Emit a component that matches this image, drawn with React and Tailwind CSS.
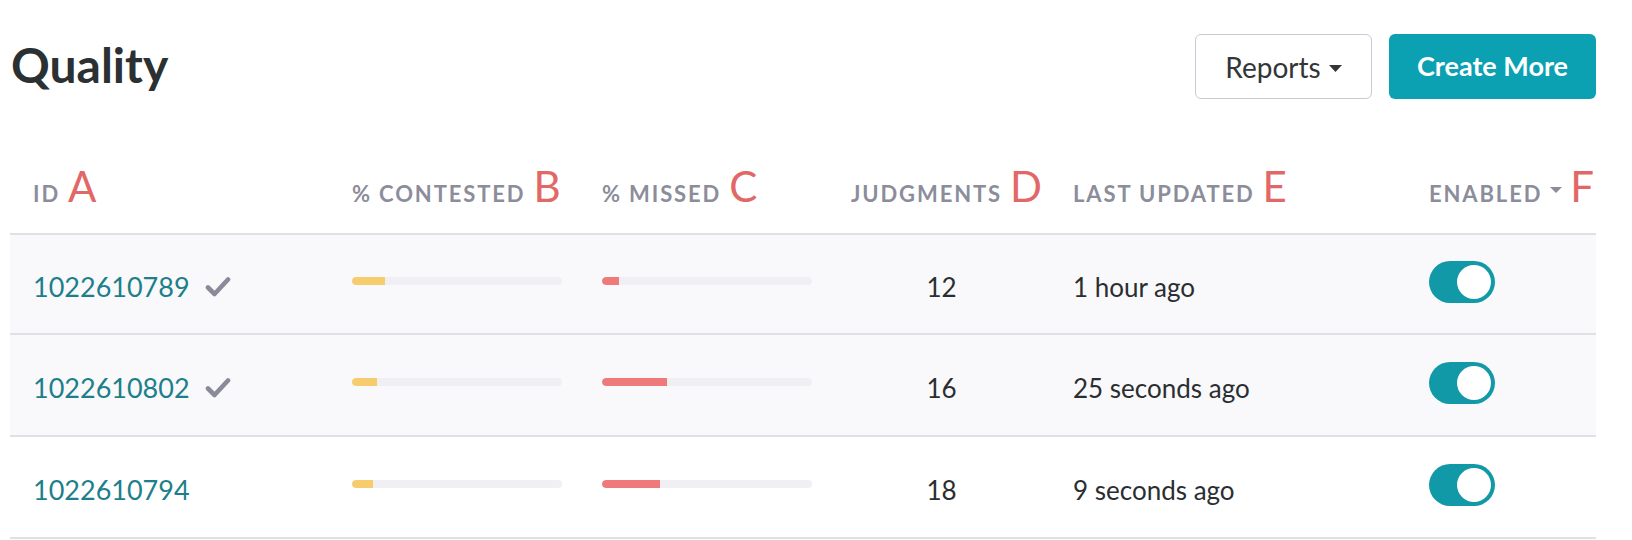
import React from 'react';

const rows = [
  { id: '1022610789', checked: true, contested: 33, missed: 17, judgments: 12, updated: '1 hour ago', shaded: true, tall: false },
  { id: '1022610802', checked: true, contested: 25, missed: 65, judgments: 16, updated: '25 seconds ago', shaded: true, tall: true },
  { id: '1022610794', checked: false, contested: 21, missed: 58, judgments: 18, updated: '9 seconds ago', shaded: false, tall: true },
];

const cols = 'grid grid-cols-[332px_250px_249px_222px_356px_1fr]';

const Mark = ({ children }) => (
  <span className="ml-[8px] text-[42px] leading-none font-normal text-[#e26868] tracking-normal">{children}</span>
);

const Label = ({ children, mark, caret }) => (
  <div className="flex items-baseline pl-[10px]">
    <span className="text-[22px] font-bold tracking-[0.085em] text-[#8b8d9b] uppercase leading-none">{children}</span>
    {caret && (
      <svg width="12" height="6" viewBox="0 0 12 6" className="ml-[8px] self-center mt-[8px]">
        <path d="M0 0 L12 0 L6 6 Z" fill="#8b8d9b" />
      </svg>
    )}
    <Mark>{mark}</Mark>
  </div>
);

const Bar = ({ total, fill, color }) => (
  <div className="h-[8px] rounded-full bg-[#f0f0f4] overflow-hidden" style={{ width: total }}>
    <div className={`h-full rounded-l-full ${color}`} style={{ width: fill }} />
  </div>
);

const Check = () => (
  <svg width="26" height="22" viewBox="0 0 26 22" className="ml-[15px] -mt-[1px]">
    <path d="M3 11.5 L9.5 18 L23 3.5" fill="none" stroke="#8a8a99" strokeWidth="4.6" strokeLinecap="round" strokeLinejoin="round" />
  </svg>
);

const Toggle = () => (
  <div className="w-[66px] h-[42px] rounded-full bg-[#1299a7] flex items-center justify-end pr-[4px]">
    <div className="w-[34px] h-[34px] rounded-full bg-white" />
  </div>
);

export default function App() {
  return (
    <div className="w-[1632px] h-[540px] bg-white px-[10px] overflow-hidden" style={{ fontFamily: 'Lato, "Noto Sans", sans-serif' }}>
      <div className="w-[1586px]">
        <div className="flex items-center justify-between pt-[34px]">
          <h1 className="text-[48px] font-bold leading-none text-[#2b3033] -mt-[4px] pl-[1px]">Quality</h1>
          <div className="flex gap-[17px]">
            <button className="w-[177px] h-[65px] rounded-[6px] border-[1.5px] border-[#c9c9d3] bg-white flex items-center justify-center gap-[8px] text-[28px] text-[#333638]">
              Reports
              <svg width="13" height="7" viewBox="0 0 13 7" className="mt-[3px]">
                <path d="M0 0 L13 0 L6.5 7 Z" fill="#333638" />
              </svg>
            </button>
            <button className="w-[207px] h-[65px] rounded-[6px] bg-[#0ba1b2] text-white text-[27px] font-bold">
              Create More
            </button>
          </div>
        </div>

        <div className={`${cols} items-center h-[86px] mt-[50px] pb-[11px] border-b-2 border-[#e0e0e6]`}>
          <div className="pl-[13px]">
            <Label mark="A">ID</Label>
          </div>
          <Label mark="B">% Contested</Label>
          <Label mark="C">% Missed</Label>
          <Label mark="D">Judgments</Label>
          <Label mark="E">Last Updated</Label>
          <Label mark="F" caret>Enabled</Label>
        </div>

        {rows.map((row) => (
          <div
            key={row.id}
            className={`${cols} items-center ${row.tall ? 'h-[102px]' : 'h-[100px]'} border-b-2 border-[#e0e0e6] ${row.shaded ? 'bg-[#f9f9fb]' : 'bg-white'}`}
          >
            <div className="flex items-center pl-[23px] pt-[6px]">
              <span className="text-[27px] text-[#1d7f8b]">{row.id}</span>
              {row.checked && <Check />}
            </div>
            <div className="pl-[10px] -mt-[6px]">
              <Bar total={210} fill={row.contested} color="bg-[#f7cc6c]" />
            </div>
            <div className="pl-[10px] -mt-[6px]">
              <Bar total={210} fill={row.missed} color="bg-[#ef7a7a]" />
            </div>
            <div className="pl-[10px] pt-[6px]">
              <div className="w-[181px] text-center text-[26px] text-[#2b2e30]">{row.judgments}</div>
            </div>
            <div className="pl-[10px] pt-[6px] text-[26px] text-[#2b2e30]">{row.updated}</div>
            <div className="pl-[10px] -mt-[5px]">
              <Toggle />
            </div>
          </div>
        ))}
      </div>
    </div>
  );
}
